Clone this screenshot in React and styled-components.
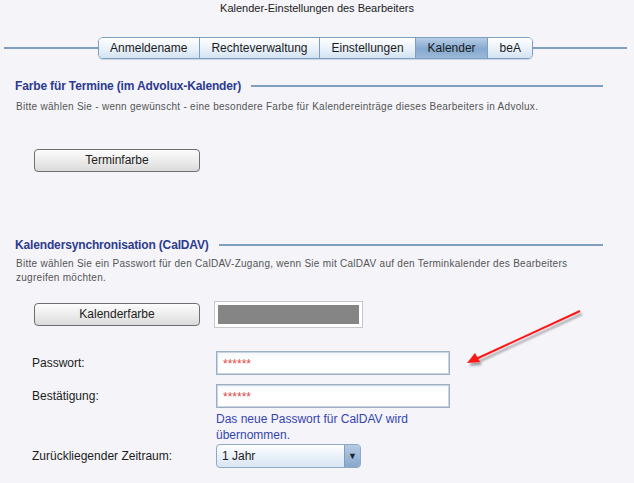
import React from "react";
import styled, { createGlobalStyle } from "styled-components";

const GlobalStyle = createGlobalStyle`
  html, body {
    margin: 0;
    padding: 0;
    background: #f4f4f9;
  }
  body {
    font-family: "Liberation Sans", Arial, sans-serif;
    color: #222;
  }
`;

const tabs = ["Anmeldename", "Rechteverwaltung", "Einstellungen", "Kalender", "beA"];

const App = () => {
  return (
    <Page>
      <GlobalStyle />
      <Title>Kalender-Einstellungen des Bearbeiters</Title>

      <TabBar>
        <TabLine />
        <Tabs>
          {tabs.map((t) => (
            <Tab key={t} $active={t === "Kalender"}>
              {t}
            </Tab>
          ))}
        </Tabs>
        <TabLine />
      </TabBar>

      <SectionHeading $top={19}>
        <HeadingText>Farbe für Termine (im Advolux-Kalender)</HeadingText>
        <HeadingLine />
      </SectionHeading>
      <Description $top={6}>
        Bitte wählen Sie - wenn gewünscht - eine besondere Farbe für
        Kalendereinträge dieses Bearbeiters in Advolux.
      </Description>
      <ButtonRow $top={34}>
        <Button>Terminfarbe</Button>
      </ButtonRow>

      <SectionHeading $top={65}>
        <HeadingText>Kalendersynchronisation (CalDAV)</HeadingText>
        <HeadingLine />
      </SectionHeading>
      <Description $top={4}>
        Bitte wählen Sie ein Passwort für den CalDAV-Zugang, wenn Sie mit
        CalDAV auf den Terminkalender des Bearbeiters
        <br />
        zugreifen möchten.
      </Description>
      <ButtonRow $top={15}>
        <Button>Kalenderfarbe</Button>
        <Swatch>
          <SwatchColor $color="#858585" />
        </Swatch>
      </ButtonRow>

      <FormRow $top={23}>
        <Label>Passwort:</Label>
        <Input>******</Input>
      </FormRow>
      <FormRow $top={9}>
        <Label>Bestätigung:</Label>
        <Input>******</Input>
      </FormRow>
      <FormRow $top={3}>
        <Label />
        <Info>
          Das neue Passwort für CalDAV wird
          <br />
          übernommen.
        </Info>
      </FormRow>
      <FormRow $top={1}>
        <Label>Zurückliegender Zeitraum:</Label>
        <Select>
          <SelectValue>1 Jahr</SelectValue>
          <SelectButton>▼</SelectButton>
        </Select>
      </FormRow>

      <Arrow width="130" height="70" viewBox="0 0 130 70">
        <defs>
          <filter id="arrowShadow" x="-20%" y="-40%" width="140%" height="180%">
            <feGaussianBlur in="SourceAlpha" stdDeviation="1.2" />
            <feOffset dx="2" dy="3" result="blur" />
            <feComponentTransfer>
              <feFuncA type="linear" slope="0.35" />
            </feComponentTransfer>
            <feMerge>
              <feMergeNode />
              <feMergeNode in="SourceGraphic" />
            </feMerge>
          </filter>
        </defs>
        <g filter="url(#arrowShadow)">
          <line x1="120" y1="7" x2="16" y2="55" stroke="#ff1414" strokeWidth="2" />
          <polygon points="7,59 15,49 20,58" fill="#ff1414" />
        </g>
      </Arrow>
    </Page>
  );
};

export default App;

const Page = styled.div`
  position: relative;
  width: 634px;
  height: 483px;
  overflow: hidden;
  background: #f4f4f9;
`;

const Title = styled.div`
  font-size: 11px;
  line-height: 16px;
  text-align: center;
  color: #222;
`;

const TabBar = styled.div`
  display: flex;
  align-items: center;
  margin-top: 21px;
  padding: 0 7px 0 4px;
`;

const TabLine = styled.div`
  flex: 1;
  height: 2px;
  background: #7f9ec0;
`;

const Tabs = styled.div`
  display: flex;
  border: 1px solid #7d9ec3;
  border-radius: 5px;
  overflow: hidden;
  box-shadow: 0 1px 1px rgba(80, 110, 150, 0.25);
`;

const Tab = styled.div`
  height: 20px;
  line-height: 20px;
  padding: 0 11.5px;
  font-size: 12px;
  color: #1c1c1c;
  background: ${(p) =>
    p.$active
      ? "linear-gradient(#b6cde6, #86a9cf 55%, #9bb9d9)"
      : "linear-gradient(#ffffff, #eaf2fa 50%, #d3e3f2)"};
  & + & {
    border-left: 1px solid #7d9ec3;
  }
`;

const SectionHeading = styled.div`
  display: flex;
  align-items: center;
  gap: 10px;
  width: 588px;
  margin: ${(p) => p.$top}px 0 0 15px;
`;

const HeadingText = styled.div`
  font-size: 12px;
  line-height: 16px;
  font-weight: bold;
  color: #2d3b8e;
  letter-spacing: -0.15px;
`;

const HeadingLine = styled.div`
  flex: 1;
  height: 2px;
  background: #7f9ec0;
`;

const Description = styled.div`
  margin: ${(p) => p.$top}px 0 0 16px;
  font-size: 10px;
  line-height: 14.5px;
  letter-spacing: 0.28px;
  color: #555;
`;

const ButtonRow = styled.div`
  display: flex;
  align-items: center;
  gap: 14px;
  margin: ${(p) => p.$top}px 0 0 34px;
`;

const Button = styled.div`
  width: 164px;
  height: 21px;
  line-height: 21px;
  text-align: center;
  font-size: 12px;
  color: #222;
  border: 1px solid #6f6f6f;
  border-radius: 4px;
  background: linear-gradient(#fdfdfd, #e9e9e9 60%, #dadada);
`;

const Swatch = styled.div`
  width: 141px;
  height: 19px;
  padding: 3px;
  background: #fff;
  border: 1px solid #c6c6ce;
`;

const SwatchColor = styled.div`
  width: 100%;
  height: 100%;
  background: ${(p) => p.$color};
`;

const FormRow = styled.div`
  display: flex;
  align-items: center;
  margin: ${(p) => p.$top}px 0 0 32px;
`;

const Label = styled.div`
  width: 184px;
  font-size: 12px;
  color: #1c1c1c;
`;

const Input = styled.div`
  box-sizing: border-box;
  width: 234px;
  height: 24px;
  padding: 4px 6px 0;
  font-size: 12px;
  line-height: 16px;
  color: #e04848;
  border: 1px solid #9daec0;
  box-shadow: inset 0 0 0 1px #c9d5e1;
  background: linear-gradient(#f4f7fa, #ffffff 40%);
`;

const Info = styled.div`
  font-size: 12px;
  line-height: 16px;
  color: #3444b0;
`;

const Select = styled.div`
  box-sizing: border-box;
  display: flex;
  width: 145px;
  height: 24px;
  border: 1px solid #8fa8c4;
  border-radius: 4px;
  overflow: hidden;
  background: linear-gradient(#ffffff, #e9f1f9 50%, #d9e6f3);
`;

const SelectValue = styled.div`
  flex: 1;
  padding-left: 5px;
  font-size: 12px;
  line-height: 22px;
  color: #1c1c1c;
`;

const SelectButton = styled.div`
  width: 15px;
  border-left: 1px solid #7f9dc0;
  background: linear-gradient(#b4cbe4, #87a8cc);
  font-size: 9px;
  line-height: 22px;
  text-align: center;
  color: #222;
`;

const Arrow = styled.svg`
  position: absolute;
  left: 460px;
  top: 304px;
`;
